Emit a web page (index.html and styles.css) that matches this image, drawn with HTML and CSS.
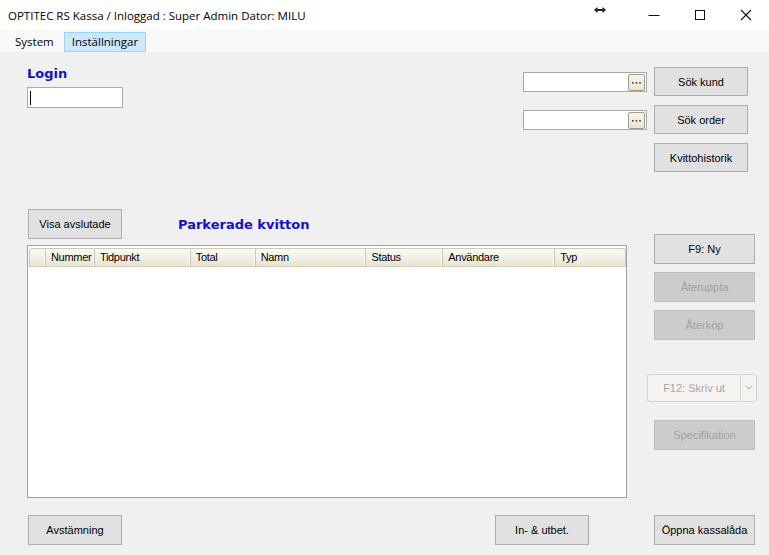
FILE: index.html
```html
<!DOCTYPE html>
<html lang="sv">
<head>
<meta charset="utf-8">
<title>OPTITEC RS Kassa</title>
<link rel="stylesheet" href="styles.css">
</head>
<body>
<div class="window">
  <div class="titlebar">
    <span class="title">OPTITEC RS Kassa / Inloggad : Super Admin Dator: MILU</span>
    <span class="resize-ico">
      <svg width="12" height="6" viewBox="0 0 12 6"><path d="M0 3 L3.5 0 V2 H8.5 V0 L12 3 L8.5 6 V4 H3.5 V6 Z" fill="#222"/></svg>
    </span>
    <div class="ctrls">
      <span class="ctrl"><svg width="12" height="12" viewBox="0 0 12 12"><path d="M0.5 6.5 H11.5" stroke="#111" stroke-width="1"/></svg></span>
      <span class="ctrl"><svg width="12" height="12" viewBox="0 0 12 12"><rect x="1.5" y="1.5" width="9" height="9" fill="none" stroke="#111" stroke-width="1"/></svg></span>
      <span class="ctrl"><svg width="12" height="12" viewBox="0 0 12 12"><path d="M1 1 L11 11 M11 1 L1 11" stroke="#111" stroke-width="1.1"/></svg></span>
    </div>
  </div>
  <div class="menubar">
    <span class="menu">System</span>
    <span class="menu active">Inställningar</span>
  </div>
  <div class="main">
    <section class="top">
      <div class="login">
        <div class="heading">Login</div>
        <div class="input login-input"><span class="caret"></span></div>
      </div>
      <div class="lookups">
        <div class="input lookup"><span class="dots"><svg width="9" height="3" viewBox="0 0 9 3"><rect x="0" y="1" width="1.6" height="1.6" fill="#444"/><rect x="3.6" y="1" width="1.6" height="1.6" fill="#444"/><rect x="7.2" y="1" width="1.6" height="1.6" fill="#444"/></svg></span></div>
        <div class="input lookup"><span class="dots"><svg width="9" height="3" viewBox="0 0 9 3"><rect x="0" y="1" width="1.6" height="1.6" fill="#444"/><rect x="3.6" y="1" width="1.6" height="1.6" fill="#444"/><rect x="7.2" y="1" width="1.6" height="1.6" fill="#444"/></svg></span></div>
      </div>
      <div class="side side-top">
        <button class="btn narrow short">Sök kund</button>
        <button class="btn narrow short">Sök order</button>
        <button class="btn narrow short">Kvittohistorik</button>
      </div>
    </section>

    <section class="mid">
      <div class="left">
        <div class="toolbar">
          <button class="btn narrow">Visa avslutade</button>
          <span class="heading">Parkerade kvitton</span>
        </div>
        <div class="grid">
          <div class="ghead">
            <span class="gcell rowhdr"></span>
            <span class="gcell c-num">Nummer</span>
            <span class="gcell c-tid">Tidpunkt</span>
            <span class="gcell c-tot">Total</span>
            <span class="gcell c-namn">Namn</span>
            <span class="gcell c-status">Status</span>
            <span class="gcell c-anv">Användare</span>
            <span class="gcell c-typ">Typ</span>
          </div>
        </div>
      </div>
      <div class="side side-mid">
        <button class="btn wide">F9: Ny</button>
        <button class="btn wide disabled">Återuppta</button>
        <button class="btn wide disabled">Återköp</button>
        <div class="combo">
          <span class="combo-text">F12: Skriv ut</span>
          <span class="combo-arrow"><svg width="8" height="5" viewBox="0 0 8 5"><path d="M0.5 0.5 L4 4 L7.5 0.5" fill="none" stroke="#a8a8a8" stroke-width="1"/></svg></span>
        </div>
        <button class="btn wide disabled spec">Specifikation</button>
      </div>
    </section>

    <section class="bottom">
      <div class="left bottom-left">
        <button class="btn narrow">Avstämning</button>
        <button class="btn narrow">In- &amp; utbet.</button>
      </div>
      <div class="side">
        <button class="btn wide">Öppna kassalåda</button>
      </div>
    </section>
  </div>
</div>
</body>
</html>
```

FILE: styles.css
```css
* { box-sizing: border-box; }

html, body {
  margin: 0;
  padding: 0;
  background: #f0f0f0;
}

.window {
  width: 769px;
  height: 555px;
  overflow: hidden;
  background: #f0f0f0;
  font-family: "Liberation Sans", Arial, sans-serif;
  font-size: 11px;
  color: #000;
}

/* ---------- title bar ---------- */
.titlebar {
  height: 30px;
  background: #ffffff;
  display: flex;
  align-items: center;
}
.title {
  font-family: "Open Sans", "Noto Sans", sans-serif;
  font-size: 11.5px;
  padding-left: 8px;
  color: #000;
  white-space: nowrap;
}
.resize-ico {
  margin-left: auto;
  margin-right: 25px;
  display: flex;
  height: 30px;
  align-items: flex-start;
  padding-top: 7px;
}
.ctrls {
  display: flex;
  height: 30px;
}
.ctrl {
  width: 46px;
  height: 30px;
  display: flex;
  align-items: center;
  justify-content: center;
  padding-bottom: 1px;
}

/* ---------- menu bar ---------- */
.menubar {
  height: 23px;
  background: #f9f9f9;
  display: flex;
  align-items: center;
  gap: 2px;
  padding-left: 7px;
  padding-top: 2px;
  border-bottom: 1px solid #f2f2f2;
}
.menu {
  font-family: "Open Sans", "Noto Sans", sans-serif;
  font-size: 11.5px;
  height: 20px;
  line-height: 18px;
  padding: 0 7px;
  border: 1px solid transparent;
}
.menu.active {
  background: #cce8ff;
  border-color: #99d1ff;
}

/* ---------- main ---------- */
.main {
  padding: 0 12px 0 27px;
}

.heading {
  font-family: "DejaVu Sans", Verdana, sans-serif;
  font-weight: bold;
  font-size: 13px;
  color: #1010d0;
  line-height: 16px;
}

.input {
  background: #fff;
  border: 1px solid #a9a9a9;
}

/* top section */
.top {
  height: 147px;
  display: flex;
  align-items: flex-start;
}
.login {
  padding-top: 13px;
  display: flex;
  flex-direction: column;
  gap: 5px;
}
.login-input {
  width: 96px;
  height: 21px;
  padding: 3px 0 0 2px;
}
.caret {
  display: block;
  width: 1px;
  height: 14px;
  background: #000;
}
.lookups {
  margin-left: auto;
  padding-top: 19px;
  display: flex;
  flex-direction: column;
  gap: 18px;
}
.lookup {
  width: 124px;
  height: 20px;
  display: flex;
  justify-content: flex-end;
  align-items: center;
  padding-right: 1px;
}
.dots {
  width: 17px;
  height: 17px;
  border: 1px solid #a39c88;
  border-radius: 2px;
  background: linear-gradient(#f7f4ea, #e9e4d5);
  display: flex;
  align-items: center;
  justify-content: center;
}

.side {
  width: 110px;
  display: flex;
  flex-direction: column;
  align-items: flex-start;
}
.side-top {
  padding-top: 14px;
  gap: 9px;
}

/* buttons */
.btn {
  font-family: "Liberation Sans", Arial, sans-serif;
  font-size: 11px;
  color: #000;
  background: #e1e1e1;
  border: 1px solid #adadad;
  height: 30px;
  padding: 0;
  margin: 0;
  border-radius: 0;
}
.btn.short { height: 29px; }
.btn.narrow { width: 94px; }
.side .btn { margin-left: 7px; }
.btn.wide { width: 101px; }
.btn.disabled {
  background: #cccccc;
  border-color: #bfbfbf;
  color: #a0a0a0;
}

/* middle section */
.mid {
  display: flex;
  gap: 20px;
}
.left {
  width: 600px;
}
.toolbar {
  margin-top: 9px;
  display: flex;
  align-items: center;
}
.toolbar .btn { margin-left: 1px; }
.toolbar .heading {
  margin-left: 56px;
  padding-top: 2px;
}

.grid {
  margin-top: 6px;
  height: 253px;
  background: #fff;
  border: 1px solid #a0a0a0;
  padding: 2px 1px 0 1px;
}
.ghead {
  display: flex;
  height: 19px;
  border: 1px solid #cfcab8;
  border-bottom-color: #d2ccb8;
  border-radius: 4px 4px 0 0;
  background: linear-gradient(#faf9f4 0%, #f1efe5 55%, #e7e3d2 100%);
  width: 597px;
  overflow: hidden;
}
.gcell {
  font-family: "Liberation Sans", Tahoma, sans-serif;
  font-size: 11px;
  letter-spacing: -0.3px;
  color: #000;
  line-height: 17px;
  padding-left: 5px;
  border-right: 1px solid #c9c5b3;
  box-shadow: inset -1px 0 0 #fbfaf5;
  white-space: nowrap;
  overflow: hidden;
}
.rowhdr { width: 16px; padding: 0; }
.c-num { width: 49px; }
.c-tid { width: 96px; }
.c-tot { width: 65px; }
.c-namn { width: 111px; }
.c-status { width: 77px; }
.c-anv { width: 112px; }
.c-typ { width: 70px; border-right: none; box-shadow: none; }

.side-mid {
  padding-top: 34px;
  gap: 8px;
}
.combo {
  margin-top: 26px;
  width: 110px;
  height: 28px;
  border: 1px solid #d2d2d2;
  border-radius: 3px;
  background: #f4f3ef;
  display: flex;
  align-items: center;
}
.combo-text {
  flex: 1;
  text-align: center;
  color: #a6a6a6;
  font-size: 11px;
  height: 100%;
  line-height: 26px;
  border-right: 1px solid #d4d4d4;
}
.combo-arrow {
  width: 15px;
  display: flex;
  justify-content: center;
  align-items: center;
  padding-bottom: 1px;
}
.side-mid .spec { margin-top: 10px; }

/* bottom */
.bottom {
  margin-top: 17px;
  display: flex;
  gap: 20px;
}
.bottom-left {
  display: flex;
  justify-content: space-between;
  padding-left: 1px;
  padding-right: 38px;
}
```
